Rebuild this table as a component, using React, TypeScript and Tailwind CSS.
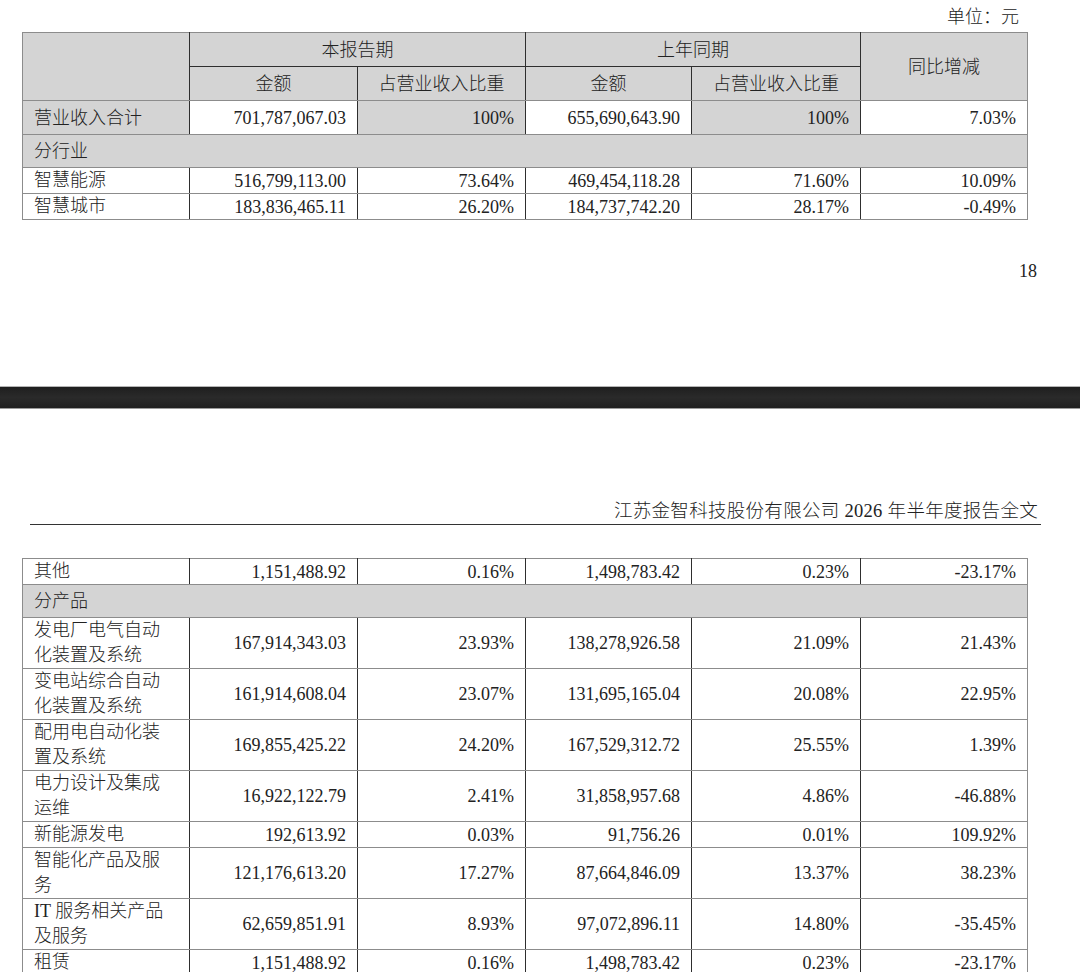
import React from "react";

type Row = {
  label: string[];
  v: string[];
  h: number;
};

const topRows: Row[] = [
  { label: ["智慧能源"], v: ["516,799,113.00", "73.64%", "469,454,118.28", "71.60%", "10.09%"], h: 26 },
  { label: ["智慧城市"], v: ["183,836,465.11", "26.20%", "184,737,742.20", "28.17%", "-0.49%"], h: 26 },
];

const bottomRows: Row[] = [
  { label: ["发电厂电气自动", "化装置及系统"], v: ["167,914,343.03", "23.93%", "138,278,926.58", "21.09%", "21.43%"], h: 50 },
  { label: ["变电站综合自动", "化装置及系统"], v: ["161,914,608.04", "23.07%", "131,695,165.04", "20.08%", "22.95%"], h: 51 },
  { label: ["配用电自动化装", "置及系统"], v: ["169,855,425.22", "24.20%", "167,529,312.72", "25.55%", "1.39%"], h: 51 },
  { label: ["电力设计及集成", "运维"], v: ["16,922,122.79", "2.41%", "31,858,957.68", "4.86%", "-46.88%"], h: 49 },
  { label: ["新能源发电"], v: ["192,613.92", "0.03%", "91,756.26", "0.01%", "109.92%"], h: 26 },
  { label: ["智能化产品及服", "务"], v: ["121,176,613.20", "17.27%", "87,664,846.09", "13.37%", "38.23%"], h: 51 },
  { label: ["IT 服务相关产品", "及服务"], v: ["62,659,851.91", "8.93%", "97,072,896.11", "14.80%", "-35.45%"], h: 51 },
  { label: ["租赁"], v: ["1,151,488.92", "0.16%", "1,498,783.42", "0.23%", "-23.17%"], h: 25 },
];

const cell = "border border-y-[#8c8c8c] border-x-[#2e2e2e] p-0 align-middle leading-[24px]";
const firstCol = "border-l-[#8c8c8c] text-left pl-[11px]";
const numCol = "text-right pr-[11px]";
const lastCol = "border-r-[#8c8c8c]";
const gray = "bg-[#d4d4d4]";

function Cols() {
  return (
    <colgroup>
      <col className="w-[167px]" />
      <col className="w-[168px]" />
      <col className="w-[168px]" />
      <col className="w-[166px]" />
      <col className="w-[169px]" />
      <col className="w-[167px]" />
    </colgroup>
  );
}

function DataRow({ r }: { r: Row }) {
  return (
    <tr>
      <td className={`${cell} ${firstCol}`} style={{ height: r.h }}>
        {r.label.map((l, i) => (
          <div key={i} className="leading-[25px]">{l}</div>
        ))}
      </td>
      {r.v.map((x, i) => (
        <td key={i} className={`${cell} ${numCol} ${i === 4 ? lastCol : ""}`}>
          {x}
        </td>
      ))}
    </tr>
  );
}

function SectionRow({ label, h }: { label: string; h: number }) {
  return (
    <tr>
      <td
        colSpan={6}
        className={`${cell} ${firstCol} ${lastCol} ${gray} border-t-[#3a3a3a]`}
        style={{ height: h }}
      >
        {label}
      </td>
    </tr>
  );
}

export default function App() {
  return (
    <div className="w-[1080px] h-[972px] overflow-hidden bg-white text-[#222] text-[18px] font-light font-['Liberation_Serif','Noto_Sans_CJK_SC',serif]">
      <div className="pt-[4px]">
        <div className="ml-[22px] w-[1005px] h-[28px] leading-[26px] text-right pr-[8px]">单位：元</div>
        <table className="ml-[22px] w-[1005px] table-fixed border-collapse">
          <Cols />
          <tbody>
            <tr>
              <td rowSpan={2} className={`${cell} ${firstCol} ${gray}`}></td>
              <td colSpan={2} className={`${cell} ${gray} text-center border-b-[#2e2e2e]`} style={{ height: 34 }}>
                本报告期
              </td>
              <td colSpan={2} className={`${cell} ${gray} text-center border-b-[#2e2e2e]`}>
                上年同期
              </td>
              <td rowSpan={2} className={`${cell} ${lastCol} ${gray} text-center`}>
                同比增减
              </td>
            </tr>
            <tr>
              <td className={`${cell} ${gray} text-center`} style={{ height: 34 }}>金额</td>
              <td className={`${cell} ${gray} text-center`}>占营业收入比重</td>
              <td className={`${cell} ${gray} text-center`}>金额</td>
              <td className={`${cell} ${gray} text-center`}>占营业收入比重</td>
            </tr>
            <tr>
              <td className={`${cell} ${firstCol} ${gray}`} style={{ height: 34 }}>营业收入合计</td>
              <td className={`${cell} ${numCol}`}>701,787,067.03</td>
              <td className={`${cell} ${numCol} ${gray}`}>100%</td>
              <td className={`${cell} ${numCol}`}>655,690,643.90</td>
              <td className={`${cell} ${numCol} ${gray}`}>100%</td>
              <td className={`${cell} ${numCol} ${lastCol}`}>7.03%</td>
            </tr>
            <SectionRow label="分行业" h={33} />
            {topRows.map((r, i) => (
              <DataRow key={i} r={r} />
            ))}
          </tbody>
        </table>

        <div className="mt-[39px] h-[24px] leading-[24px] text-right pr-[43px]">18</div>

        <div className="mt-[103px] h-[23px] border-t border-t-[#b4b4b4] border-b border-b-[#9a9a9a] bg-[linear-gradient(#1f1f1f,#2a2a2a_50%,#1f1f1f)]"></div>

        <div className="mt-[90px] ml-[30px] w-[1011px] h-[26px] leading-[24px] text-right pr-[3px] text-[18.5px] tracking-[0.3px] border-b border-b-[#333]">
          江苏金智科技股份有限公司 2026 年半年度报告全文
        </div>

        <table className="mt-[33px] ml-[22px] w-[1005px] table-fixed border-collapse">
          <Cols />
          <tbody>
            <DataRow r={{ label: ["其他"], v: ["1,151,488.92", "0.16%", "1,498,783.42", "0.23%", "-23.17%"], h: 24 }} />
            <SectionRow label="分产品" h={33} />
            {bottomRows.map((r, i) => (
              <DataRow key={i} r={r} />
            ))}
          </tbody>
        </table>
      </div>
    </div>
  );
}
